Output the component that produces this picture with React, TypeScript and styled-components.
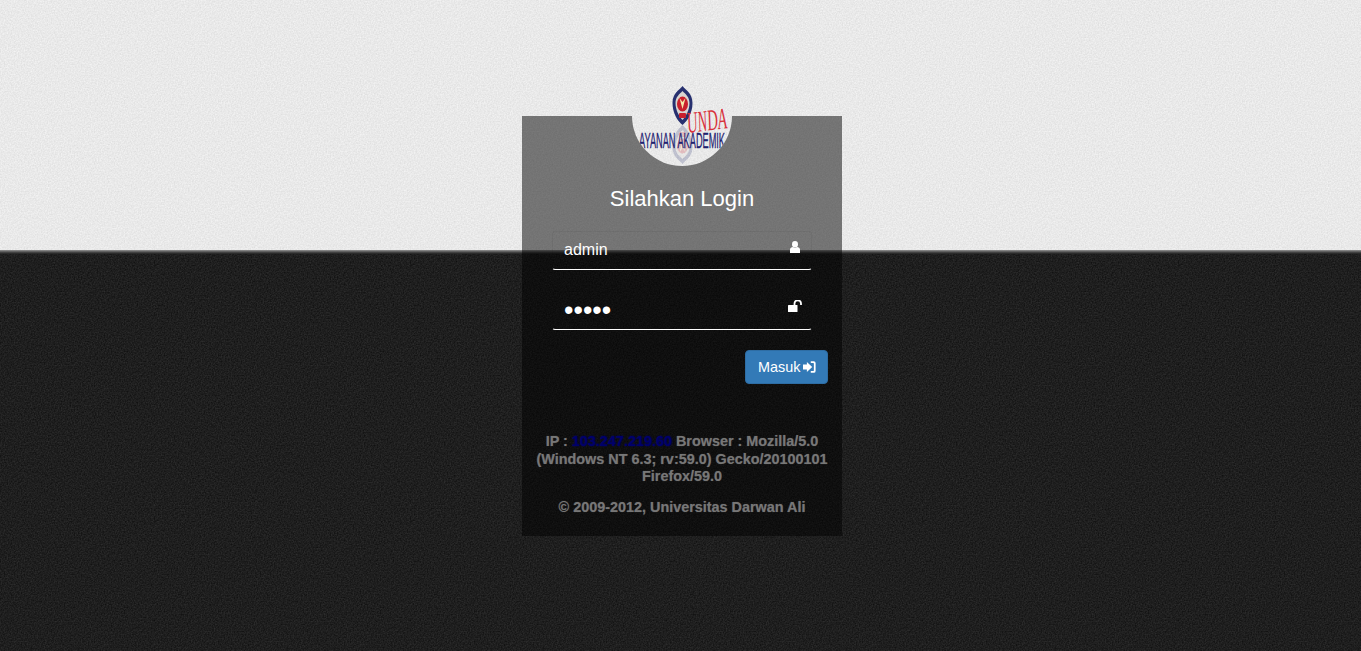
import React from "react";
import styled, { createGlobalStyle } from "styled-components";

const noise = (k: number, c: number, f: number) =>
  `url("data:image/svg+xml,%3Csvg xmlns='http://www.w3.org/2000/svg' width='256' height='256'%3E%3Cfilter id='n' color-interpolation-filters='sRGB'%3E%3CfeTurbulence type='fractalNoise' baseFrequency='${f}' numOctaves='2' stitchTiles='stitch'/%3E%3CfeColorMatrix values='${k} 0 0 0 ${c} ${k} 0 0 0 ${c} ${k} 0 0 0 ${c} 0 0 0 0 1'/%3E%3C/filter%3E%3Crect width='256' height='256' filter='url(%23n)'/%3E%3C/svg%3E")`;

const lightTexture = noise(0.12, 0.854, 0.7);
const darkTexture = noise(0.16, 0.04, 0.7);

const Global = createGlobalStyle`
  html, body { margin: 0; height: 100%; overflow: hidden; }
  body { font-family: "Liberation Sans", Arial, sans-serif; }
`;

const Page = styled.div`
  position: relative;
  display: flex;
  flex-direction: column;
  height: 651px;
`;

const TopHalf = styled.div`
  height: 250px;
  background-color: #e9e9e9;
  background-image: ${lightTexture};
`;

const Seam = styled.div`
  height: 4px;
  background: linear-gradient(#969696, #6a6a6a 30%, #383838 70%, #222);
`;

const BottomHalf = styled.div`
  flex: 1;
  background-color: #1e1e1e;
  background-image: ${darkTexture};
`;

const Card = styled.div`
  position: absolute;
  top: 116px;
  left: 522px;
  box-sizing: border-box;
  width: 320px;
  height: 420px;
  padding: 69px 14px 0;
  background: rgba(0, 0, 0, 0.5);
  display: flex;
  flex-direction: column;
`;

const LogoDisc = styled.div`
  position: absolute;
  top: -50px;
  left: 110px;
  width: 100px;
  height: 100px;
  border-radius: 50%;
  overflow: hidden;
  background-color: #e9e9e9;
  background-image: ${lightTexture};
  background-position: -632px -66px;
`;

const Title = styled.h2`
  margin: 0 0 18px;
  font-size: 22px;
  line-height: 28px;
  font-weight: 400;
  color: #fff;
  text-align: center;
`;

const Field = styled.div`
  position: relative;
  box-sizing: border-box;
  height: 39px;
  margin: 0 16px 21px;
  width: 260px;
  border: 1px solid rgba(0, 0, 0, 0.05);
  border-bottom: 1px solid #fff;
  border-radius: 3px;
`;

const Input = styled.input`
  box-sizing: border-box;
  width: 100%;
  height: 100%;
  padding: 0 40px 2px 11px;
  background: transparent;
  border: 0;
  outline: 0;
  color: #fff;
  font-family: "Liberation Sans", Arial, sans-serif;
  font-size: 16px;
`;

const PasswordInput = styled(Input)`
  padding: 0 40px 0 11px;
  font-size: 27px;
`;

const FieldIcon = styled.svg<{ $top: number; $right: number }>`
  position: absolute;
  top: ${(p) => p.$top}px;
  right: ${(p) => p.$right}px;
  fill: #fff;
`;

const Actions = styled.div`
  display: flex;
  justify-content: flex-end;
  margin-top: -1px;
`;

const Button = styled.button`
  display: inline-flex;
  align-items: center;
  gap: 3px;
  box-sizing: border-box;
  width: 83px;
  height: 34px;
  padding: 0 11px 0 12px;
  background: #337ab7;
  border: 1px solid #2e6da4;
  border-radius: 4px;
  color: #fff;
  font-family: "Liberation Sans", Arial, sans-serif;
  font-size: 14.4px;
  white-space: nowrap;
`;

const Footer = styled.div`
  margin-top: 49px;
  color: #777;
  font-size: 14.4px;
  font-weight: 700;
  line-height: 17.5px;
  text-align: center;
  text-shadow: 0 0 1px rgba(119, 119, 119, 0.6);
`;

const FooterLine = styled.p`
  margin: 0 0 13px;
`;

const IpLink = styled.a`
  color: #00006a;
  text-decoration: none;
  text-shadow: 0 0 2px #000070;
`;

const Logo = () => (
  <svg width="100" height="100" viewBox="0 0 100 100">
    <defs>
      <g id="crest">
        <path d="M50.500 20c-3 4-10 7-10 17 0 10 5 18 10 22 5-4 10-12 10-22 0-10-7-13-10-17z" fill="#27306f" />
        <path d="M50.500 25c-3 3-7 6-7 12 0 7 3.500 13 7 17 3.500-4 7-10 7-17 0-6-4-9-7-12z" fill="#d8d4d0" />
        <ellipse cx="50.500" cy="38" rx="5.500" ry="7.500" fill="#c9202c" />
        <path d="M47.500 32l3 11 3-11-3 4z" fill="#f6e7a8" />
        <rect x="47" y="47" width="7" height="5" rx="1" fill="#c9202c" />
      </g>
    </defs>
    <use href="#crest" />
    <use href="#crest" transform="matrix(1 0 0 -1 0 118)" opacity="0.22" />
    <text x="56" y="67" fill="#d8323c" fontFamily="'Liberation Serif', serif" fontStyle="italic" fontSize="30" textLength="40" lengthAdjust="spacingAndGlyphs" transform="rotate(-7 56 67)">UNDA</text>
    <text x="7" y="82" fill="#1e2270" stroke="#1e2270" strokeWidth="0.300" fontFamily="'Liberation Sans', sans-serif" fontSize="22" textLength="86" lengthAdjust="spacingAndGlyphs">AYANAN AKADEMIK</text>
  </svg>
);

export default function App() {
  return (
    <>
      <Global />
      <Page>
        <TopHalf />
        <Seam />
        <BottomHalf />
        <Card>
          <LogoDisc>
            <Logo />
          </LogoDisc>
          <Title>Silahkan Login</Title>
          <Field>
            <Input type="text" defaultValue="admin" readOnly />
            <FieldIcon $top={9} $right={11} width="10" height="12" viewBox="0 0 10 12">
              <ellipse cx="5" cy="3.200" rx="3" ry="3.200" />
              <path d="M0 12V8.500C0 7 1.500 6.200 3 6c1 .9 3 .9 4 0 1.500.2 3 1 3 2.500V12z" />
            </FieldIcon>
          </Field>
          <Field>
            <PasswordInput type="password" defaultValue="admin" readOnly />
            <FieldIcon $top={8} $right={9} width="14" height="13" viewBox="0 0 14 13">
              <rect x="0" y="5" width="9.500" height="7" rx="0.500" />
              <path d="M6.500 5V3.500A3.200 3.200 0 0 1 13 3.500V5" fill="none" stroke="#fff" strokeWidth="1.800" />
            </FieldIcon>
          </Field>
          <Actions>
            <Button type="button">
              Masuk
              <svg width="13" height="12" viewBox="0 0 13 12" fill="#fff">
                <path d="M0 3.500h4V.8L9.500 6 4 11.200V8.500H0z" />
                <path d="M8 0h3a2 2 0 0 1 2 2v8a2 2 0 0 1-2 2H8v-1.800h2.700a.5.500 0 0 0 .5-.5V2.300a.5.500 0 0 0-.5-.5H8z" />
              </svg>
            </Button>
          </Actions>
          <Footer>
            <FooterLine>
              IP : <IpLink href="#">103.247.219.60</IpLink> Browser : Mozilla/5.0 (Windows NT 6.3; rv:59.0) Gecko/20100101 Firefox/59.0
            </FooterLine>
            <FooterLine>© 2009-2012, Universitas Darwan Ali</FooterLine>
          </Footer>
        </Card>
      </Page>
    </>
  );
}
